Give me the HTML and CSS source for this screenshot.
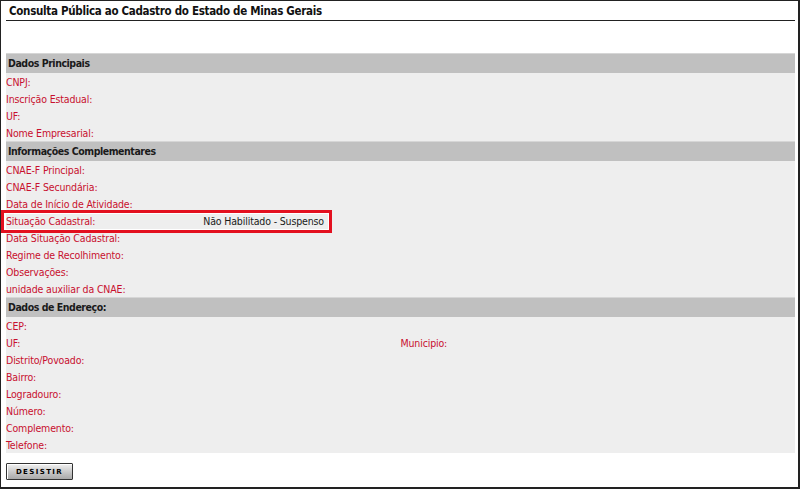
FILE: index.html
```html
<!DOCTYPE html>
<html lang="pt-BR">
<head>
<meta charset="utf-8">
<title>Consulta Pública ao Cadastro</title>
<link rel="stylesheet" href="styles.css">
</head>
<body>
<div class="frame">
  <h1 class="title">Consulta Pública ao Cadastro do Estado de Minas Gerais</h1>
  <div class="content">
    <div class="section-head">Dados Principais</div>
    <div class="rows">
      <div class="row"><span class="lbl">CNPJ:</span></div>
      <div class="row"><span class="lbl">Inscrição Estadual:</span></div>
      <div class="row"><span class="lbl">UF:</span></div>
      <div class="row"><span class="lbl">Nome Empresarial:</span></div>
    </div>
    <div class="section-head">Informações Complementares</div>
    <div class="rows">
      <div class="row"><span class="lbl">CNAE-F Principal:</span></div>
      <div class="row"><span class="lbl">CNAE-F Secundária:</span></div>
      <div class="row"><span class="lbl">Data de Início de Atividade:</span></div>
      <div class="row highlight"><span class="lbl">Situação Cadastral:</span><span class="val">Não Habilitado - Suspenso</span></div>
      <div class="row"><span class="lbl">Data Situação Cadastral:</span></div>
      <div class="row"><span class="lbl">Regime de Recolhimento:</span></div>
      <div class="row"><span class="lbl">Observações:</span></div>
      <div class="row"><span class="lbl">unidade auxiliar da CNAE:</span></div>
    </div>
    <div class="section-head">Dados de Endereço:</div>
    <div class="rows">
      <div class="row"><span class="lbl">CEP:</span></div>
      <div class="row"><span class="lbl">UF:</span><span class="val"></span><span class="lbl">Municipio:</span></div>
      <div class="row"><span class="lbl">Distrito/Povoado:</span></div>
      <div class="row"><span class="lbl">Bairro:</span></div>
      <div class="row"><span class="lbl">Logradouro:</span></div>
      <div class="row"><span class="lbl">Número:</span></div>
      <div class="row"><span class="lbl">Complemento:</span></div>
      <div class="row"><span class="lbl">Telefone:</span></div>
    </div>
    <div class="actions"><button class="btn" type="button">DESISTIR</button></div>
  </div>
</div>
</body>
</html>
```
FILE: styles.css
```css
html, body {
  margin: 0;
  padding: 0;
  background: #ffffff;
}
body {
  font-family: "DejaVu Sans Condensed", "DejaVu Sans", Verdana, sans-serif;
  font-stretch: condensed;
  font-size: 10.5px;
  letter-spacing: -0.15px;
  color: #222;
}
.frame {
  box-sizing: border-box;
  width: 800px;
  height: 489px;
  border-style: solid;
  border-color: #222;
  border-width: 1px 2px 2px 1px;
  padding: 0 3px 0 5px;
}
.title {
  margin: 0;
  padding: 3px 0 0 3px;
  height: 16px;
  font-size: 11.5px;
  letter-spacing: -0.3px;
  font-weight: bold;
  color: #111;
  border-bottom: 1px solid #222;
}
.content {
  padding-top: 32px;
}
.section-head {
  box-sizing: border-box;
  height: 20px;
  line-height: 19px;
  background: #c0c0c0;
  border-top: 1px solid #d6d6d6;
  padding-left: 2px;
  font-size: 10.5px;
  letter-spacing: -0.45px;
  font-weight: bold;
  color: #1a1a1a;
}
.rows {
  background: #eeeeee;
}
.row {
  box-sizing: border-box;
  display: grid;
  grid-template-columns: repeat(4, 1fr);
  height: 17px;
  padding-top: 2px;
  line-height: 15px;
  position: relative;
}
.lbl {
  color: #c8102e;
}
.val {
  color: #1a1a1a;
}
.highlight::after {
  content: "";
  position: absolute;
  left: -5px;
  top: -2px;
  width: 331px;
  height: 23px;
  box-sizing: border-box;
  border: 3px solid #e3101f;
  box-shadow: inset 0 0 0 1px #fff;
}
.actions {
  padding-top: 10px;
}
.btn {
  box-sizing: border-box;
  width: 67px;
  height: 17px;
  padding: 0;
  border: 1px solid #333;
  border-radius: 1px;
  background: linear-gradient(#f2f2f2, #cfcfcf 45%, #a9a9a9);
  box-shadow: inset 1px 1px 0 #fff;
  font-family: "DejaVu Sans", Verdana, sans-serif;
  font-stretch: normal;
  font-size: 7px;
  font-weight: bold;
  letter-spacing: 1.4px;
  color: #000;
  line-height: 14px;
}
```
